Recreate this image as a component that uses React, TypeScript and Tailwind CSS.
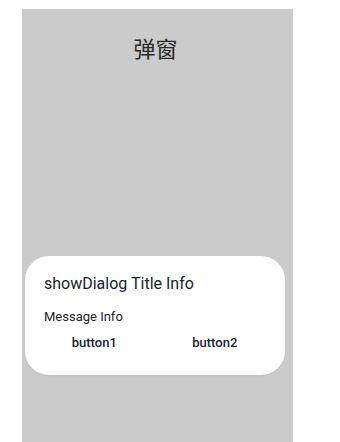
export default function App() {
  return (
    <div className="h-[442px] w-[340px] bg-white pt-[9px] font-['Roboto','Noto_Sans_CJK_SC',sans-serif]">
      <div className="ml-[22px] flex h-[433px] w-[271px] flex-col bg-[#cbcbcb]">
        <h1 className="mt-[26px] pr-[4px] text-center text-[22px] leading-[30px] text-[#2a2a2a]">
          弹窗
        </h1>
        <div className="ml-[3px] mt-[191px] flex h-[119px] w-[260px] flex-col rounded-[24px] bg-white pl-[19px] pr-[10px] pt-[16px] shadow-[0_1px_2px_rgba(0,0,0,0.06)]">
          <div className="text-[16px] leading-[24px] text-[#182431]">showDialog Title Info</div>
          <div className="mt-[12px] text-[13px] leading-[18px] text-[#182431]">Message Info</div>
          <div className="-ml-[10px] mt-[8px] flex">
            <button className="flex-1 text-[13px] font-medium leading-[18px] text-[#182431]">button1</button>
            <button className="flex-1 text-[13px] font-medium leading-[18px] text-[#182431]">button2</button>
          </div>
        </div>
      </div>
    </div>
  );
}
